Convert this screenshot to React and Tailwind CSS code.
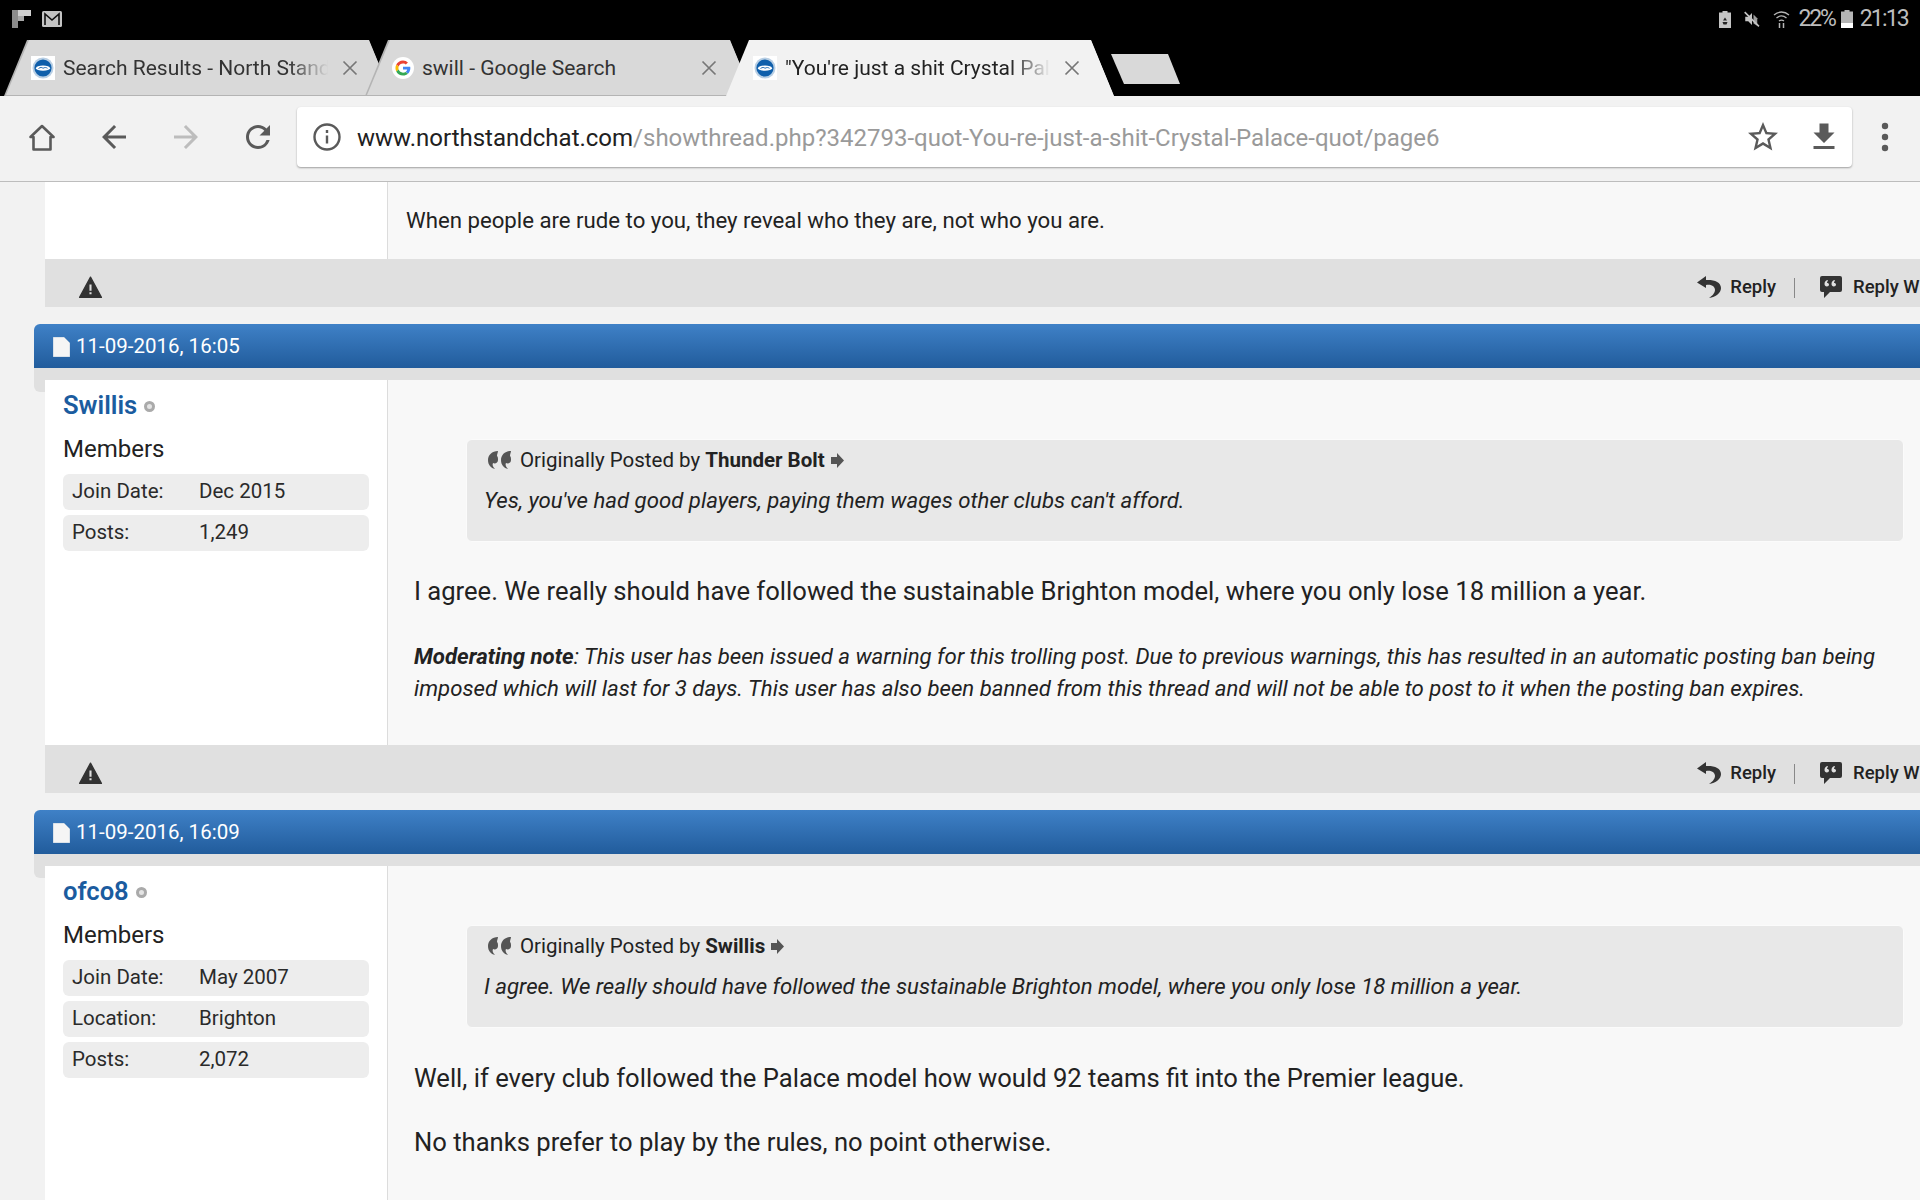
import React from "react";

function Favicon() {
  return (
    <svg width="24" height="24" viewBox="0 0 24 24" className="shrink-0 bg-white">
      <circle cx="12" cy="12" r="10.500" fill="#b9cfe4" />
      <circle cx="12" cy="12" r="8.600" fill="#0f5fab" />
      <ellipse cx="12" cy="12.200" rx="7" ry="2.600" fill="#fff" />
      <path d="M7.500 12.500c2-1.500 3.500-1.200 4.500-.2 1.500-1 3.200-1 4.500 0" fill="none" stroke="#0f5fab" strokeWidth="0.900" />
    </svg>
  );
}

function GoogleIcon() {
  return (
    <svg width="22" height="22" viewBox="0 0 48 48" className="shrink-0 rounded-full bg-white">
      <path fill="#EA4335" d="M24 14c2.900 0 5 1.200 6.200 2.300l4.600-4.500C31.900 9.200 28.300 7.500 24 7.500c-6.400 0-12 3.700-14.700 9l5.300 4.100C15.900 16.700 19.600 14 24 14z" />
      <path fill="#4285F4" d="M40 24.400c0-1.400-.1-2.400-.4-3.400H24v6.100h9.100c-.2 1.500-1.200 3.800-3.400 5.300l5.200 4c3.100-2.900 5.100-7.100 5.100-12z" />
      <path fill="#FBBC05" d="M14.600 27.400c-.4-1.100-.6-2.200-.6-3.400s.2-2.300.6-3.400l-5.300-4.100C8.200 18.800 7.500 21.300 7.500 24s.7 5.200 1.800 7.500z" />
      <path fill="#34A853" d="M24 40.500c4.500 0 8.200-1.500 10.900-4l-5.200-4c-1.400 1-3.300 1.600-5.700 1.600-4.400 0-8.100-2.700-9.400-6.700l-5.300 4.100c2.700 5.300 8.300 9 14.700 9z" />
    </svg>
  );
}

function CloseIcon() {
  return (
    <svg width="16" height="16" viewBox="0 0 16 16" className="shrink-0" stroke="#777" strokeWidth="1.700" fill="none">
      <path d="M1.500 1.500l13 13M14.500 1.500l-13 13" />
    </svg>
  );
}

function Tab({ icon, title, fade, active, className }) {
  const line = active ? "bg-[#f2f2f2]" : "bg-[#b4b4b4] pb-px";
  const fill = active ? "bg-[#f2f2f2] text-[#222]" : "bg-[#d9d9d9] text-[#333]";
  return (
    <div className={`h-14 w-[388px] [clip-path:polygon(0_100%,23px_0,365px_0,388px_100%)] ${line} ${className}`}>
      <div className={`flex h-full items-center pl-[27px] [clip-path:polygon(2px_100%,25px_0,365px_0,388px_100%)] ${fill}`}>
        {icon}
        <span className={`ml-2 w-[268px] overflow-hidden whitespace-nowrap pt-[2px] text-[21px] ${fade ? "[mask-image:linear-gradient(to_right,black_84%,transparent_99%)]" : ""}`}>
          {title}
        </span>
        <span className="ml-[11px]"><CloseIcon /></span>
      </div>
    </div>
  );
}

function StatusBar() {
  return (
    <div className="flex h-10 items-center bg-black pb-[2px] pl-3 pr-3 text-[#bdbdbd]">
      <svg width="19" height="18" viewBox="0 0 19 18">
        <path d="M0 0h6v18H0z" fill="#8c8c8c" />
        <path d="M6 0h13v6H6z" fill="#d0d0d0" />
        <path d="M6 6h6v5H6z" fill="#a8a8a8" />
      </svg>
      <svg width="20" height="16" viewBox="0 0 20 16" className="ml-[11px]">
        <rect width="20" height="16" rx="1.500" fill="#c4c4c4" />
        <path d="M3 14V3l7 6 7-6v11" fill="none" stroke="#111" strokeWidth="1.600" />
      </svg>
      <div className="ml-auto flex items-center">
        <svg width="12" height="17" viewBox="0 0 12 17">
          <path d="M3.500 0h5v1.500H12V17H0V1.500h3.500z" fill="#c4c4c4" />
          <path d="M6 6.500l2 3H4zM3.500 11h5l-1 2.500h-3z" fill="#222" />
        </svg>
        <svg width="18" height="18" viewBox="0 0 24 24" className="ml-3" fill="#c4c4c4">
          <path d="M3 9v6h4l5 5V4L7 9H3z" />
          <path d="M14 6v12l5 3V11z" opacity="0.800" />
          <path d="M3 2l19 19-1.500 1.500-19-19z" />
        </svg>
        <svg width="17" height="19" viewBox="0 0 17 19" className="ml-3" fill="none" stroke="#b5b5b5" strokeWidth="1.300">
          <path d="M1 5c4.500-4 10.500-4 15 0M3.500 8c3-2.500 7-2.500 10 0M6 11c1.500-1 3.500-1 5 0" />
          <path d="M6.500 13v5M10.500 13v5" strokeWidth="1.500" />
        </svg>
        <span className="ml-[9px] text-[23px] tracking-[-2.200px]">22%</span>
        <svg width="12" height="18" viewBox="0 0 12 18" className="ml-[6px]">
          <path d="M3.500 0h5v1.500H12V18H0V1.500h3.500z" fill="#b5b5b5" />
          <path d="M0 13h12v5H0z" fill="#fff" />
        </svg>
        <span className="ml-[7px] text-[23px] tracking-[-1.800px]">21:13</span>
      </div>
    </div>
  );
}

function TabStrip() {
  return (
    <div className="flex h-14 bg-black pl-1">
      <Tab icon={<Favicon />} title="Search Results - North Stand" fade />
      <Tab icon={<GoogleIcon />} title="swill - Google Search" className="-ml-[27px] relative" />
      <Tab icon={<Favicon />} title={`"You're just a shit Crystal Pal`} fade active className="-ml-[27px] relative" />
      <div className="-ml-[3px] mt-[14px] h-[30px] w-[69px] bg-[#d9d9d9] [clip-path:polygon(0_0,57px_0,69px_100%,13px_100%)]" />
    </div>
  );
}

function Toolbar() {
  return (
    <div className="flex h-[86px] items-center border-b border-[#bdbdbd] bg-[#f2f2f2] pb-[3px] pl-[29px]">
      <svg width="26" height="27" viewBox="0 0 26 27" fill="none" stroke="#5a5a5a" strokeWidth="2.600" strokeLinejoin="round">
        <path d="M1.500 13L13 2l11.500 11H21.500v12.500h-17V13z" />
      </svg>
      <svg width="36" height="36" viewBox="0 0 24 24" className="ml-[41px]" fill="#5a5a5a">
        <path d="M20 11H7.830l5.590-5.590L12 4l-8 8 8 8 1.410-1.410L7.830 13H20z" />
      </svg>
      <svg width="36" height="36" viewBox="0 0 24 24" className="ml-9" fill="#bdbdbd">
        <path d="M4 11h12.170l-5.590-5.590L12 4l8 8-8 8-1.410-1.410L16.170 13H4z" />
      </svg>
      <svg width="36" height="36" viewBox="0 0 24 24" className="ml-9" fill="#5a5a5a">
        <path d="M17.650 6.350A7.950 7.950 0 0 0 12 4C7.580 4 4 7.580 4 12s3.580 8 8 8c3.730 0 6.840-2.550 7.730-6h-2.080A5.990 5.990 0 0 1 12 18c-3.310 0-6-2.690-6-6s2.690-6 6-6c1.660 0 3.140.69 4.220 1.780L13 11h7V4l-2.350 2.350z" />
      </svg>
      <div className="ml-[21px] flex h-[60px] w-[1555px] items-center rounded bg-white pl-4 pr-[10px] shadow-[0_1px_2px_rgba(0,0,0,0.35)]">
        <svg width="28" height="28" viewBox="0 0 28 28" fill="none" stroke="#5a5a5a" strokeWidth="2.400">
          <circle cx="14" cy="14" r="12.500" />
          <path d="M14 12.500v8M14 7v3" />
        </svg>
        <span className="ml-4 whitespace-nowrap pt-[2px] text-[24px] text-[#212121]">
          www.northstandchat.com
          <span className="text-[#9a9a9a]">/showthread.php?342793-quot-You-re-just-a-shit-Crystal-Palace-quot/page6</span>
        </span>
        <svg width="36" height="36" viewBox="0 0 24 24" className="ml-auto" fill="#5a5a5a">
          <path d="M22 9.240l-7.190-.62L12 2 9.190 8.630 2 9.240l5.460 4.730L5.820 21 12 17.270 18.180 21l-1.630-7.030L22 9.240zM12 15.400l-3.760 2.270 1-4.280-3.320-2.880 4.380-.38L12 6.100l1.710 4.040 4.380.38-3.320 2.880 1 4.280L12 15.400z" />
        </svg>
        <svg width="36" height="36" viewBox="0 0 24 24" className="ml-[25px]" fill="#5a5a5a">
          <path d="M19 9h-4V3H9v6H5l7 7 7-7zM5 18v2h14v-2H5z" />
        </svg>
      </div>
      <svg width="8" height="30" viewBox="0 0 8 30" className="ml-[29px]" fill="#5a5a5a">
        <circle cx="4" cy="4" r="3.200" />
        <circle cx="4" cy="15" r="3.200" />
        <circle cx="4" cy="26" r="3.200" />
      </svg>
    </div>
  );
}

function PostFooter() {
  return (
    <div className="ml-[11px] flex h-12 items-center overflow-hidden whitespace-nowrap bg-[#e0e0e0] pl-[33px] pt-[9px] font-medium text-[#222]">
      <svg width="25" height="24" viewBox="0 0 24 23" fill="#333" stroke="#333" strokeWidth="1.200" strokeLinejoin="round" className="-mt-[2px]">
        <path d="M1.500 21.500h21L12 2 1.500 21.500z" />
        <path d="M11 9h2v6h-2zM11 16.500h2v2h-2z" fill="#e0e0e0" stroke="none" />
      </svg>
      <svg width="24" height="23" viewBox="0 0 24 23" className="ml-auto" fill="#333">
        <path d="M9 0L0 6.500 9 12V9c6-1 9 2 9 5s-3 6-6 8c7-1 12-5 12-10C24 6 17 3.500 9 4z" />
      </svg>
      <span className="ml-[9px] text-[18.500px]">Reply</span>
      <span className="ml-[18px] h-5 w-px bg-[#888]" />
      <svg width="24" height="23" viewBox="0 0 24 23" className="ml-[24px]">
        <path d="M3 0h18a2 2 0 0 1 2 2v12a2 2 0 0 1-2 2H11l-6 6v-6H3a2 2 0 0 1-2-2V2a2 2 0 0 1 2-2z" fill="#333" />
        <path d="M8.500 4c-2 .5-3 2-3 4 0 1.500 1 2.500 2.300 2.500S10 9.500 10 8.500 9 6.800 8 7c0-1 .3-1.800 1-2.300zM15.500 4c-2 .5-3 2-3 4 0 1.500 1 2.500 2.300 2.500S17 9.500 17 8.500 16 6.800 15 7c0-1 .3-1.800 1-2.300z" fill="#e0e0e0" />
      </svg>
      <span className="ml-[10px] w-[67px] shrink-0 text-[18.500px]">Reply W</span>
    </div>
  );
}

function PostHeader({ date }) {
  return (
    <>
      <div className="flex h-11 items-center rounded-tl-md bg-linear-to-b from-[#3f81c7] to-[#215c9c] pl-[19px] text-[20.500px] text-white">
        <svg width="17" height="20" viewBox="0 0 17 20" className="mr-[6px] mt-[2px]">
          <path d="M0 0h11l6 6v14H0z" fill="#f5f5f5" stroke="#8aa8c8" strokeWidth="0.500" />
        </svg>
        <span className="pt-px">{date}</span>
      </div>
      <div className="h-3 bg-[#e0e0e0]" />
    </>
  );
}

function UserInfo({ name, rows }) {
  return (
    <div className="w-[343px] shrink-0 border-r border-[#dcdcdc] bg-white px-[18px] pt-[10px] text-[#222]">
      <div className="flex h-[30px] items-center">
        <span className="text-[25.600px] font-semibold text-[#1b5c9f]">{name}</span>
        <span className="ml-[7px] mt-[2px] h-[11px] w-[11px] rounded-full border-[3px] border-[#aaa] bg-[#e4e4e4]" />
      </div>
      <div className="mt-[14px] text-[24px] leading-[30px]">Members</div>
      <div className="mt-[10px] flex flex-col gap-[5px]">
        {rows.map(([label, value]) => (
          <div key={label} className="flex h-9 items-center rounded-md bg-[#ededed] pb-[2px] pl-[9px] text-[20.500px] text-[#2a2a2a]">
            <span className="w-[127px]">{label}</span>
            <span>{value}</span>
          </div>
        ))}
      </div>
    </div>
  );
}

function Quote({ author, text }) {
  return (
    <div className="ml-[52px] h-[103px] rounded-md border border-[#fbfbfb] bg-[#e8e8e8] pl-[17px] pt-[5px] text-[#222]">
      <div className="flex h-[30px] items-center text-[20.500px]">
        <svg width="25" height="20" viewBox="0 0 25 20" fill="#555" className="ml-[3px] mr-2">
          <path d="M11 1C5 1 1 5 1 10c0 5 3 8 7 9-2-2-3-4-2-6 2 1 5 0 5-3 0-1.500 0-3-1-4 0-2 1-4 1-5z" />
          <path d="M24 1c-6 0-10 4-10 9 0 5 3 8 7 9-2-2-3-4-2-6 2 1 5 0 5-3 0-1.500 0-3-1-4 0-2 1-4 1-5z" />
        </svg>
        <span>Originally Posted by <b className="font-bold">{author}</b></span>
        <svg width="13" height="15" viewBox="0 0 13 15" fill="#555" className="ml-[6px]">
          <path d="M0 4h6V0l7 7.500L6 15v-4H0z" />
        </svg>
      </div>
      <div className="mt-[10px] text-[22.200px] italic leading-[30px]">{text}</div>
    </div>
  );
}

export default function App() {
  return (
    <div className="h-[1200px] w-[1920px] overflow-hidden bg-[#f2f2f2] font-[Roboto,sans-serif] text-[#222]">
      <StatusBar />
      <TabStrip />
      <Toolbar />

      <div className="pl-[34px]">
        {/* end of the previous post */}
        <div className="ml-[11px] flex h-[77px]">
          <div className="w-[343px] shrink-0 border-r border-[#dcdcdc] bg-white" />
          <div className="flex-1 bg-[#f8f8f8] pl-[18px] pt-[24px] text-[22.200px] leading-[28px]">
            When people are rude to you, they reveal who they are, not who you are.
          </div>
        </div>
        <PostFooter />

        <div className="mt-[17px]">
          <PostHeader date="11-09-2016, 16:05" />
          <div className="flex h-[365px]">
            <div className="h-3 w-[11px] shrink-0 rounded-bl-md bg-[#e0e0e0]" />
            <UserInfo name="Swillis" rows={[["Join Date:", "Dec 2015"], ["Posts:", "1,249"]]} />
            <div className="flex-1 bg-[#f8f8f8] pl-[26px] pr-4 pt-[59px]">
              <Quote author="Thunder Bolt" text="Yes, you've had good players, paying them wages other clubs can't afford." />
              <p className="mt-[31px] text-[25.600px] leading-[36px]">
                I agree. We really should have followed the sustainable Brighton model, where you only lose 18 million a year.
              </p>
              <p className="mt-[31px] text-[22.200px] italic leading-[32px]">
                <b className="font-bold">Moderating note</b>: This user has been issued a warning for this trolling post. Due to previous warnings, this has resulted in an automatic posting ban being imposed which will last for 3 days. This user has also been banned from this thread and will not be able to post to it when the posting ban expires.
              </p>
            </div>
          </div>
          <PostFooter />
        </div>

        <div className="mt-[17px]">
          <PostHeader date="11-09-2016, 16:09" />
          <div className="flex h-[340px]">
            <div className="h-3 w-[11px] shrink-0 rounded-bl-md bg-[#e0e0e0]" />
            <UserInfo name="ofco8" rows={[["Join Date:", "May 2007"], ["Location:", "Brighton"], ["Posts:", "2,072"]]} />
            <div className="flex-1 bg-[#f8f8f8] pl-[26px] pr-4 pt-[59px]">
              <Quote author="Swillis" text="I agree. We really should have followed the sustainable Brighton model, where you only lose 18 million a year." />
              <p className="mt-[32px] text-[25.600px] leading-[36px]">
                Well, if every club followed the Palace model how would 92 teams fit into the Premier league.
              </p>
              <p className="mt-[28px] text-[25.600px] leading-[36px]">
                No thanks prefer to play by the rules, no point otherwise.
              </p>
            </div>
          </div>
        </div>
      </div>
    </div>
  );
}
